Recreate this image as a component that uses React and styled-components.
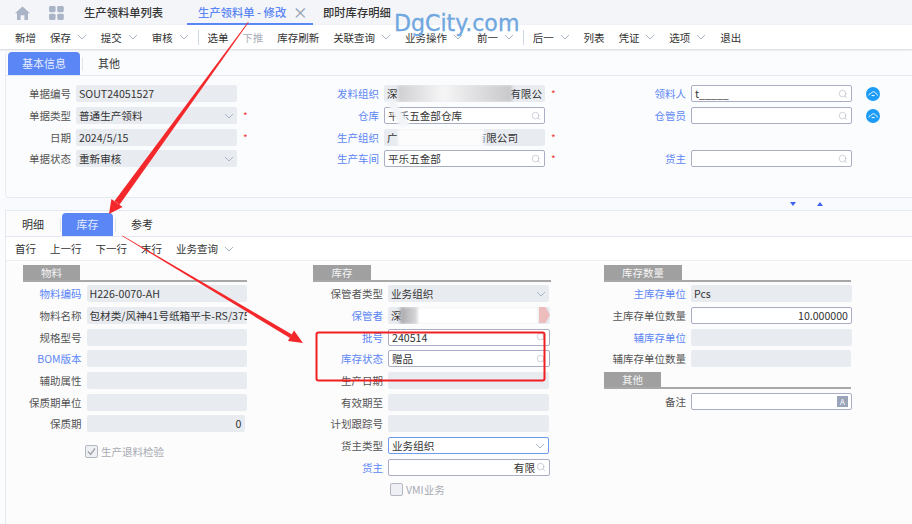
import React from "react";
import styled, { createGlobalStyle } from "styled-components";
import { Search } from "lucide-react";

const BLUE = "#5b86f5";

function Chevron() {
  return (
    <ChevronSvg viewBox="0 0 10 6">
      <path d="M1 1 L5 5 L9 1" fill="none" stroke="#a9b4c8" strokeWidth="1" />
    </ChevronSvg>
  );
}

function HomeIcon() {
  return (
    <svg width="15" height="14" viewBox="0 0 15 14">
      <path d="M7.5 0.5 L15 7.2 L13 7.2 L13 14 L9.4 14 L9.4 9.2 L5.6 9.2 L5.6 14 L2 14 L2 7.2 L0 7.2 Z" fill="#a9b4c6" />
    </svg>
  );
}

function AppsIcon() {
  return (
    <svg width="15" height="14" viewBox="0 0 15 14">
      <rect x="0" y="0" width="6.6" height="6.2" rx="1.4" fill="#a9b4c6" />
      <rect x="8.2" y="0" width="6.6" height="6.2" rx="1.4" fill="#a9b4c6" />
      <rect x="0" y="7.8" width="6.6" height="6.2" rx="1.4" fill="#a9b4c6" />
      <rect x="8.2" y="7.8" width="6.6" height="6.2" rx="1.4" fill="#a9b4c6" />
    </svg>
  );
}

function CloudButton() {
  return (
    <CloudSvg viewBox="0 0 14 14">
      <circle cx="7" cy="7" r="7" fill="#1c9cf6" />
      <path d="M2.8 8.4 C3 6.8 4.4 6.6 5 6.4 C6 4.2 9 4.4 9.8 6.4 C10.8 6.6 11.4 7.4 11.4 8.4 M5.6 8.6 L8.6 8.6" fill="none" stroke="#fff" strokeWidth="1" />
    </CloudSvg>
  );
}

function Overlay() {
  return (
    <OverlaySvg viewBox="0 0 912 524">
      <defs>
        <filter id="smear">
          <feGaussianBlur stdDeviation="1" />
        </filter>
      </defs>
      <polygon points="386,100 394,100 410,125 400,127" fill="#f3f4f7" filter="url(#smear)" />
      <polygon points="248,22 248.6,22.4 119.5,204.7 114.5,201" fill="#f4272a" />
      <polygon points="109,214 111.4,199 122.6,207" fill="#f4272a" />
      <polygon points="122,236 122.4,235.4 292,334.5 290,338" fill="#f4272a" />
      <polygon points="303,343 294,330.5 288,341" fill="#f4272a" />
      <rect x="316.5" y="332.5" width="228" height="48" rx="2" fill="none" stroke="#f01f22" strokeWidth="2" />
    </OverlaySvg>
  );
}

function TextField({ kind, right, suffix, children }) {
  return (
    <Field $kind={kind} $right={right}>
      {children}
      {suffix === "search" && (
        <SuffixSlot>
          <Search size={10} strokeWidth={1.4} color="#aeb4c2" />
        </SuffixSlot>
      )}
      {suffix === "select" && (
        <SuffixSlot>
          <Chevron />
        </SuffixSlot>
      )}
      {suffix === "note" && <NoteMark>A</NoteMark>}
    </Field>
  );
}

function FormRow({ label, link, star, extra, labelWidth, fieldWidth, children, ...rest }) {
  return (
    <Row $labelWidth={labelWidth} $fieldWidth={fieldWidth}>
      <Label $link={link}>{label}</Label>
      {React.isValidElement(children) ? children : <TextField {...rest}>{children}</TextField>}
      {star && <Star>*</Star>}
      {extra}
    </Row>
  );
}

const commands = [
  ["新增"], ["保存", 1], ["提交", 1], ["审核", 1], "sep", ["选单"], ["下推", 0, 1], ["库存刷新"],
  ["关联查询", 1], ["业务操作", 1], ["前一", 1], "sep", ["后一", 1], ["列表"], ["凭证", 1], ["选项", 1], ["退出"],
];

const upperProps = { labelWidth: 65, fieldWidth: 161 };
const leftProps = { labelWidth: 58.5, fieldWidth: 160 };

export default function App() {
  return (
    <Page>
      <GlobalStyle />
      <TitleBar>
        <IconSlot><HomeIcon /></IconSlot>
        <IconSlot><AppsIcon /></IconSlot>
        <TitleTab $width={103}>生产领料单列表</TitleTab>
        <TitleTab $width={126} $active>
          生产领料单 - 修改 <CloseMark>×</CloseMark>
        </TitleTab>
        <TitleTab $width={78}>即时库存明细</TitleTab>
      </TitleBar>

      <Toolbar>
        {commands.map((c, i) =>
          c === "sep" ? (
            <ToolSep key={i} />
          ) : (
            <ToolItem key={i} $muted={c[2]}>
              {c[0]}
              {c[1] ? <Chevron /> : null}
            </ToolItem>
          )
        )}
      </Toolbar>

      <TopPanel>
        <TabStrip $height={24}>
          <Tab $active $width={72}>基本信息</Tab>
          <TabSep />
          <Tab $width={50}>其他</Tab>
        </TabStrip>
        <FormGrid>
          <Column>
            <FormRow {...upperProps} label="单据编号" kind="readonly">SOUT24051527</FormRow>
            <FormRow {...upperProps} label="单据类型" star kind="readonly" suffix="select">普通生产领料</FormRow>
            <FormRow {...upperProps} label="日期" star kind="readonly">2024/5/15</FormRow>
            <FormRow {...upperProps} label="单据状态" kind="readonly" suffix="select">重新审核</FormRow>
          </Column>
          <Column>
            <FormRow {...upperProps} label="发料组织" link star>
              <TextField kind="readonly">
                <Split><span>深</span><span>有限公</span></Split>
                <Smudge $left={14} $width={114} $tone="linear-gradient(90deg, #cfcfd2, #f6f6f7 40%, #dedee0 70%, #c8c8ca)" />
              </TextField>
            </FormRow>
            <FormRow {...upperProps} label="仓库" link suffix="search">平乐五金部仓库</FormRow>
            <FormRow {...upperProps} label="生产组织" link star>
              <TextField kind="readonly">
                <Split $pad={24}><span>广</span><span>有限公司</span></Split>
                <Smudge $left={14} $width={86} $tone="#fcfcfd" />
              </TextField>
            </FormRow>
            <FormRow {...upperProps} label="生产车间" link star suffix="search">平乐五金部</FormRow>
          </Column>
          <Column>
            <FormRow {...upperProps} label="领料人" link suffix="search" extra={<CloudButton />}>t_____</FormRow>
            <FormRow {...upperProps} label="仓管员" link suffix="search" extra={<CloudButton />} />
            <RowGap />
            <FormRow {...upperProps} label="货主" link suffix="search" />
          </Column>
        </FormGrid>
      </TopPanel>

      <SplitBar>
        <TriangleDown />
        <TriangleUp />
      </SplitBar>

      <BottomPanel>
        <TabStrip $height={26}>
          <Tab $width={50}>明细</Tab>
          <TabSep />
          <Tab $active $width={51}>库存</Tab>
          <TabSep />
          <Tab $width={50}>参考</Tab>
        </TabStrip>
        <SubToolbar>
          <ToolItem>首行</ToolItem>
          <ToolItem>上一行</ToolItem>
          <ToolItem>下一行</ToolItem>
          <ToolItem>末行</ToolItem>
          <ToolItem>业务查询<Chevron /></ToolItem>
        </SubToolbar>
        <Sections>
          <Section $width={224}>
            <SectionHead><SectionTag $width={57}>物料</SectionTag></SectionHead>
            <Stack>
              <FormRow {...leftProps} label="物料编码" link kind="readonly">H226-0070-AH</FormRow>
              <FormRow {...leftProps} label="物料名称" kind="readonly">包材类/风神41号纸箱平卡-RS/375</FormRow>
              <FormRow {...leftProps} label="规格型号" kind="readonly" />
              <FormRow {...leftProps} label="BOM版本" link kind="readonly" />
              <FormRow {...leftProps} label="辅助属性" kind="readonly" />
              <FormRow {...leftProps} label="保质期单位" kind="readonly" />
              <FormRow labelWidth={58.5} fieldWidth={158} label="保质期" kind="readonly" right>0</FormRow>
            </Stack>
            <CheckLine $left={62} $top={6}>
              <CheckBox viewBox="0 0 13 13">
                <rect x="0.5" y="0.5" width="12" height="12" rx="1.5" fill="#eef0f3" stroke="#b4b8c2" />
                <path d="M3 6.5 L5.6 9.5 L10 3.5" fill="none" stroke="#a0a4ae" strokeWidth="1.4" />
              </CheckBox>
              生产退料检验
            </CheckLine>
          </Section>

          <Section $width={238}>
            <SectionHead><SectionTag $width={58}>库存</SectionTag></SectionHead>
            <Stack>
              <FormRow labelWidth={70} fieldWidth={161} label="保管者类型" kind="readonly" suffix="select">业务组织</FormRow>
              <FormRow labelWidth={70} fieldWidth={162} label="保管者" link>
                <TextField kind="readonly">
                  深
                  <Smudge $left={12} $width={18} $tone="linear-gradient(90deg, #a8a8aa, #dcdcde)" />
                  <Smudge $left={30} $width={120} $tone="#ffffff" />
                  <PinkMark />
                </TextField>
              </FormRow>
              <FormRow labelWidth={70} fieldWidth={162} label="批号" link suffix="search">240514</FormRow>
              <FormRow labelWidth={70} fieldWidth={162} label="库存状态" link suffix="search">赠品</FormRow>
              <FormRow labelWidth={70} fieldWidth={161} label="生产日期" kind="readonly" />
              <FormRow labelWidth={70} fieldWidth={161} label="有效期至" kind="readonly" />
              <FormRow labelWidth={70} fieldWidth={161} label="计划跟踪号" kind="readonly" />
              <FormRow labelWidth={70} fieldWidth={161} label="货主类型" kind="focus" suffix="select">业务组织</FormRow>
              <FormRow labelWidth={70} fieldWidth={162} label="货主" link>
                <TextField suffix="search">
                  <Split $pad={11}><span /><span>有限</span></Split>
                  <Smudge $left={3} $width={108} $tone="#ffffff" />
                </TextField>
              </FormRow>
            </Stack>
            <CheckLine $left={77} $top={0}>
              <CheckBox viewBox="0 0 13 13">
                <rect x="0.5" y="0.5" width="12" height="12" rx="1.5" fill="#eef0f3" stroke="#b4b8c2" />
              </CheckBox>
              VMI业务
            </CheckLine>
          </Section>

          <Section $width={247}>
            <SectionHead><SectionTag $width={78}>库存数量</SectionTag></SectionHead>
            <Stack>
              <FormRow labelWidth={82} fieldWidth={161} label="主库存单位" link kind="readonly">Pcs</FormRow>
              <FormRow labelWidth={82} fieldWidth={161} label="主库存单位数量" right>10.000000</FormRow>
              <FormRow labelWidth={82} fieldWidth={161} label="辅库存单位" link kind="readonly" />
              <FormRow labelWidth={82} fieldWidth={160} label="辅库存单位数量" kind="readonly" />
            </Stack>
            <SectionHead $spaced><SectionTag $width={57}>其他</SectionTag></SectionHead>
            <Stack>
              <FormRow labelWidth={82} fieldWidth={161} label="备注" suffix="note" />
            </Stack>
          </Section>
        </Sections>
      </BottomPanel>

      <Watermark>DgCity.com</Watermark>
      <Overlay />
    </Page>
  );
}

const GlobalStyle = createGlobalStyle`
  html, body {
    margin: 0;
    padding: 0;
    background: #fbfcfe;
  }
  * {
    box-sizing: border-box;
  }
`;

const Page = styled.div`
  position: relative;
  width: 912px;
  height: 524px;
  overflow: hidden;
  color: #333;
  font-family: "Noto Sans CJK SC", "Noto Sans", sans-serif;
  font-size: 10.5px;
  background: #fbfcfe;
`;

const TitleBar = styled.div`
  display: flex;
  align-items: center;
  height: 25px;
  padding-left: 15px;
  background: #f4f5f9;
`;

const IconSlot = styled.div`
  display: flex;
  width: 34px;
`;

const TitleTab = styled.div`
  display: flex;
  align-items: center;
  height: 25px;
  width: ${(p) => p.$width}px;
  padding-left: ${(p) => (p.$active ? 11 : 0)}px;
  font-size: 11.3px;
  font-weight: 500;
  white-space: pre;
  color: ${(p) => (p.$active ? BLUE : "#333")};
  border-bottom: 2px solid ${(p) => (p.$active ? BLUE : "transparent")};
  &:nth-child(3) {
    margin-left: 1px;
  }
  &:nth-child(5) {
    margin-left: 10px;
  }
`;

const CloseMark = styled.span`
  margin-left: 4px;
  color: #9aa3b5;
  font-size: 15px;
  line-height: 1;
`;

const Toolbar = styled.div`
  display: flex;
  align-items: center;
  gap: 13.9px;
  height: 24px;
  padding-left: 15px;
  background: #fff;
  box-shadow: 0 1px 2px rgba(120, 130, 150, 0.3);
`;

const ToolItem = styled.div`
  display: flex;
  align-items: center;
  gap: 6px;
  white-space: nowrap;
  color: ${(p) => (p.$muted ? "#aab0ba" : "#333")};
`;

const ToolSep = styled.div`
  width: 1px;
  height: 15px;
  margin: 0 -5px;
  background: #cfd8e6;
`;

const ChevronSvg = styled.svg`
  display: block;
  width: 10px;
  height: 6px;
`;

const TopPanel = styled.section`
  height: 146px;
  margin: 3px 0 0 5px;
  border-left: 1px solid #e8ebf2;
  border-bottom: 1px solid #e4e8f1;
  border-radius: 4px 0 0 4px;
  background: #fbfcfe;
`;

const TabStrip = styled.div`
  display: flex;
  align-items: flex-end;
  height: ${(p) => p.$height}px;
  padding-left: 2px;
  border-bottom: 1px solid #e4e8f1;
`;

const Tab = styled.div`
  display: flex;
  align-items: center;
  justify-content: center;
  width: ${(p) => p.$width}px;
  height: 23.5px;
  font-size: 11px;
  border-radius: 4px 4px 0 0;
  color: ${(p) => (p.$active ? "#e4ecff" : "#333")};
  background: ${(p) => (p.$active ? BLUE : "transparent")};
`;

const TabSep = styled.span`
  width: 1px;
  height: 14px;
  margin: 0 1.5px 4px;
  background: #dfe3ec;
`;

const FormGrid = styled.div`
  display: grid;
  grid-template-columns: 308px 307px 1fr;
  padding-top: 7px;
`;

const Column = styled.div`
  display: flex;
  flex-direction: column;
`;

const Stack = styled(Column)``;

const Row = styled.div`
  display: grid;
  grid-template-columns: ${(p) => p.$labelWidth}px ${(p) => p.$fieldWidth}px auto;
  align-items: center;
  column-gap: 5px;
  height: 21.7px;
`;

const RowGap = styled.div`
  height: 21.7px;
`;

const Label = styled.div`
  text-align: right;
  white-space: nowrap;
  color: ${(p) => (p.$link ? BLUE : "#555")};
`;

const Field = styled.div`
  position: relative;
  display: flex;
  align-items: center;
  justify-content: ${(p) => (p.$right ? "flex-end" : "flex-start")};
  height: 17px;
  padding: 0 3px;
  overflow: hidden;
  white-space: nowrap;
  font-size: 10.6px;
  color: #333;
  border-radius: 2px;
  background: ${(p) => (p.$kind === "readonly" ? "#e8ebf0" : "#fff")};
  border: ${(p) =>
    p.$kind === "readonly"
      ? "none"
      : p.$kind === "focus"
      ? "1px solid #6f9cf0"
      : "1px solid #a9aec4"};
`;

const Split = styled.div`
  display: flex;
  justify-content: space-between;
  width: 100%;
  padding-right: ${(p) => p.$pad || 0}px;
`;

const Smudge = styled.span`
  position: absolute;
  top: 0;
  bottom: 0;
  left: ${(p) => p.$left}px;
  width: ${(p) => p.$width}px;
  background: ${(p) => p.$tone};
  filter: blur(1.5px);
`;

const PinkMark = styled.span`
  position: absolute;
  right: 0;
  top: 0;
  width: 11px;
  height: 16px;
  background: #edbcbc;
  clip-path: polygon(0 0, 60% 0, 100% 50%, 60% 100%, 0 100%);
`;

const SuffixSlot = styled.span`
  position: absolute;
  right: 3px;
  top: 50%;
  display: flex;
  transform: translateY(-50%);
`;

const NoteMark = styled.span`
  position: absolute;
  right: 3px;
  top: 2px;
  width: 11px;
  height: 11px;
  font-size: 8px;
  line-height: 11px;
  text-align: center;
  color: #fff;
  background: #9aa4b8;
`;

const Star = styled.span`
  color: #f23c3c;
  font-size: 10px;
  margin-left: 1px;
`;

const CloudSvg = styled.svg`
  width: 14px;
  height: 14px;
  margin-left: 9px;
`;

const SplitBar = styled.div`
  display: flex;
  align-items: center;
  gap: 21px;
  height: 12px;
  padding-left: 790px;
  background: #f9fafe;
`;

const TriangleDown = styled.span`
  width: 0;
  height: 0;
  border-left: 3.5px solid transparent;
  border-right: 3.5px solid transparent;
  border-top: 4px solid #3f63f0;
`;

const TriangleUp = styled.span`
  width: 0;
  height: 0;
  border-left: 3.5px solid transparent;
  border-right: 3.5px solid transparent;
  border-bottom: 4px solid #3f63f0;
`;

const BottomPanel = styled.section`
  height: 314px;
  margin-left: 5px;
  border-left: 1px solid #e4e9f3;
  border-top: 1px solid #e6e9f2;
  background: #fcfcfd;
`;

const SubToolbar = styled.div`
  display: flex;
  align-items: center;
  gap: 14px;
  height: 24px;
  padding-left: 9px;
  background: #fff;
  border-bottom: 1px solid #eef0f5;
`;

const Sections = styled.div`
  display: grid;
  grid-template-columns: 290px 291px 1fr;
  padding: 4px 0 0 17px;
`;

const Section = styled.div`
  width: ${(p) => p.$width}px;
`;

const SectionHead = styled.div`
  display: flex;
  height: 17px;
  margin: ${(p) => (p.$spaced ? "2px 0 2px" : "0 0 1px")};
  border-bottom: 2px solid #a8a8a8;
`;

const SectionTag = styled.div`
  display: flex;
  align-items: center;
  justify-content: center;
  width: ${(p) => p.$width}px;
  font-size: 10.5px;
  color: #f4f4f4;
  background: #a0a0a0;
`;

const CheckLine = styled.div`
  display: flex;
  align-items: center;
  gap: 3px;
  height: 16px;
  margin: ${(p) => p.$top + 3}px 0 0 ${(p) => p.$left}px;
  color: #a8abb2;
`;

const CheckBox = styled.svg`
  width: 13px;
  height: 13px;
`;

const Watermark = styled.div`
  position: absolute;
  left: 394px;
  top: 10px;
  font-family: "DejaVu Sans", sans-serif;
  font-size: 22.1px;
  color: #6fa7e0;
  -webkit-text-stroke: 0.3px #6fa7e0;
`;

const OverlaySvg = styled.svg`
  position: absolute;
  left: 0;
  top: 0;
  width: 912px;
  height: 524px;
  pointer-events: none;
`;
